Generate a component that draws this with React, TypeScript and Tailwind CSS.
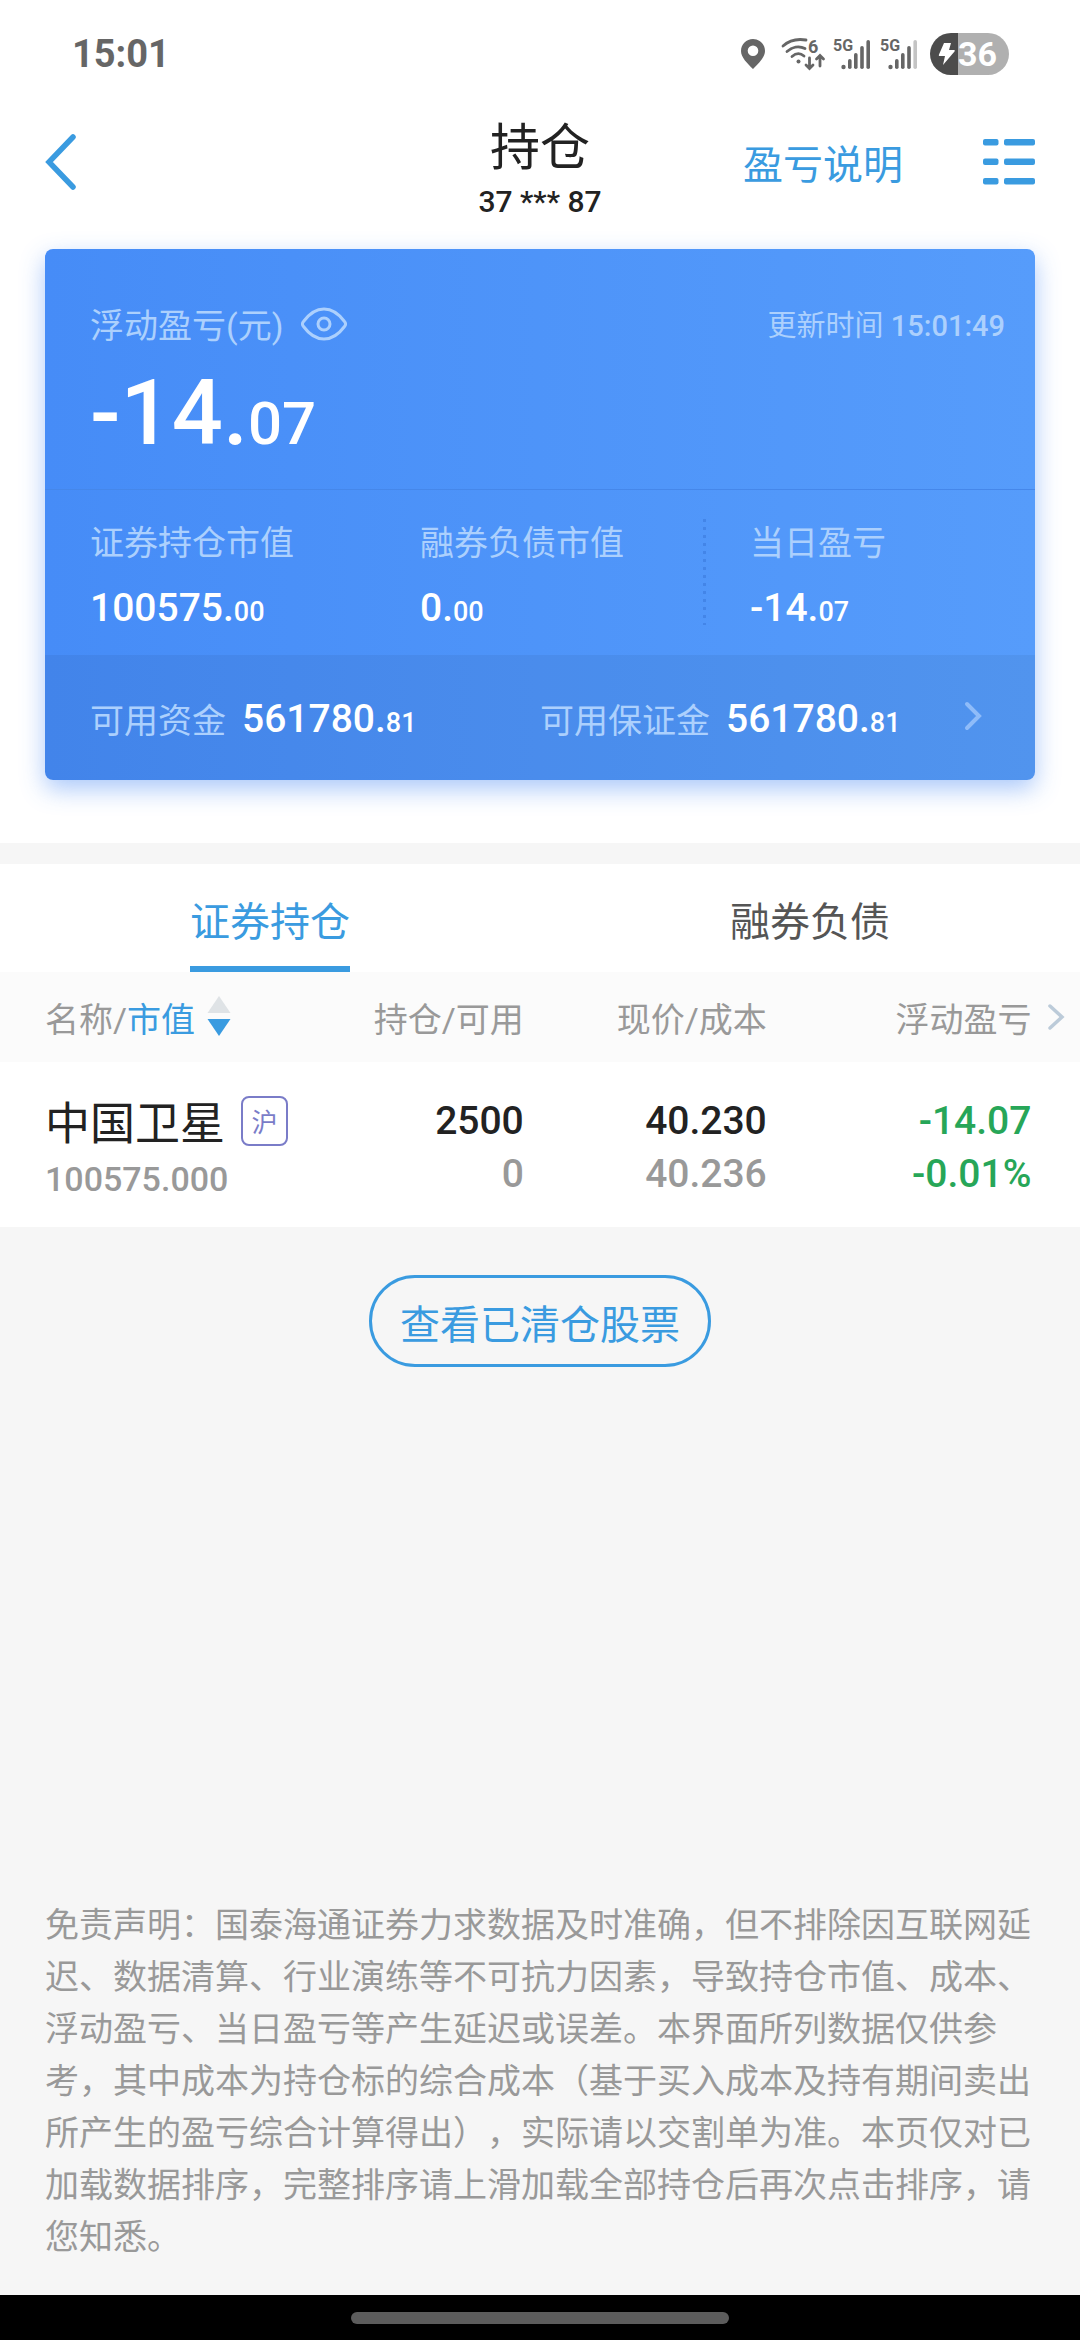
import type { ReactNode } from "react";

type Amount = {
  label: string;
  whole: string;
  cents: string;
};

type Holding = {
  name: string;
  market: string;
  value: string;
  quantity: string;
  available: string;
  price: string;
  cost: string;
  profit: string;
  profitRate: string;
};

const summary: Amount[] = [
  { label: "证券持仓市值", whole: "100575.", cents: "00" },
  { label: "融券负债市值", whole: "0.", cents: "00" },
  { label: "当日盈亏", whole: "-14.", cents: "07" },
];

const funds: Amount[] = [
  { label: "可用资金", whole: "561780.", cents: "81" },
  { label: "可用保证金", whole: "561780.", cents: "81" },
];

const holdings: Holding[] = [
  {
    name: "中国卫星",
    market: "沪",
    value: "100575.000",
    quantity: "2500",
    available: "0",
    price: "40.230",
    cost: "40.236",
    profit: "-14.07",
    profitRate: "-0.01%",
  },
];

function Signal({ weak = false }: { weak?: boolean }) {
  return (
    <svg
      className="overflow-visible"
      width="38"
      height="36"
      viewBox="0 0 38 36"
      fill="#666666"
      aria-hidden="true"
    >
      <text x="0" y="15" fontSize="16" fontWeight="700" fontFamily="Roboto, sans-serif">
        5G
      </text>
      <circle cx="10.5" cy="31" r="2.2" />
      <rect x="15" y="23" width="3.6" height="10" rx="1.8" />
      <rect x="21" y="17" width="3.6" height="16" rx="1.8" />
      <rect x="27.2" y="10" width="3.6" height="23" rx="1.8" />
      <rect x="33.4" y="4" width="3.6" height="29" rx="1.8" fill={weak ? "#c4c4c4" : "#666666"} />
    </svg>
  );
}

function StatusBar() {
  return (
    <div className="flex h-[108px] items-center justify-between pr-[71px] pl-[72px]">
      <span className="text-[38px] leading-[42px] font-bold text-[#666666]">15:01</span>
      <div className="flex items-center">
        <svg width="24" height="30" viewBox="0 0 24 30" fill="#666666" aria-hidden="true">
          <path
            fillRule="evenodd"
            d="M12 0C5.4 0 0 5.2 0 12c0 6.5 6.5 12.5 12 18 5.5-5.5 12-11.5 12-18C24 5.2 18.6 0 12 0Zm0 6.5a5.3 5.3 0 1 1 0 10.600 5.3 5.3 0 0 1 0-10.600Z"
          />
        </svg>
        <svg
          className="ml-4 overflow-visible"
          width="44"
          height="36"
          viewBox="0 0 44 36"
          fill="none"
          stroke="#666666"
          strokeWidth="2.8"
          strokeLinecap="round"
          aria-hidden="true"
        >
          <path d="M2 10C8 4.500 16 2.500 25 4" />
          <path d="M6 15.500c5-4.500 12-6 18-3" />
          <path d="M11 20.500c4-3.500 8.500-3.500 12-.5" />
          <circle cx="17.500" cy="25.500" r="2" fill="#666666" stroke="none" />
          <path d="M28.500 22v10M25 29l3.500 3.500L32 29" />
          <path d="M39 30V20M35.500 23l3.500-3.500 3.500 3.500" />
          <text
            x="27"
            y="17"
            fontSize="18"
            fontWeight="700"
            fontFamily="Roboto, sans-serif"
            fill="#666666"
            stroke="none"
          >
            6
          </text>
        </svg>
        <div className="ml-2 flex gap-[9px]">
          <Signal />
          <Signal weak />
        </div>
        <div className="ml-3 flex h-[42px] w-[79px] items-center rounded-full bg-[linear-gradient(90deg,#4c4c4c_35%,#b0b0b0_35%)] pl-2">
          <svg width="18" height="24" viewBox="0 0 18 24" fill="#ffffff" aria-hidden="true">
            <path d="M6 1h7l-2 7h5c1 0 1 1 .5 1.500L5 23l2-9H2c-1 0-1.500-.5-1-1.500Z" />
          </svg>
          <span className="ml-[2px] text-[34px] leading-[42px] font-bold text-white">36</span>
        </div>
      </div>
    </div>
  );
}

function Header() {
  return (
    <header className="grid h-[116px] grid-cols-[1fr_auto_1fr] items-center px-[45px]">
      <button type="button" aria-label="返回" className="justify-self-start pb-2">
        <svg width="34" height="58" viewBox="0 0 34 58" fill="none" stroke="#3a9be0" aria-hidden="true">
          <path d="M28 4 4 29l24 25" strokeWidth="5.500" strokeLinecap="round" />
        </svg>
      </button>
      <div className="text-center text-[#222222]">
        <h1 className="text-[50px] leading-[72px]">持仓</h1>
        <p className="text-[30px] leading-9 font-medium">37 *** 87</p>
      </div>
      <div className="flex items-center gap-20 justify-self-end pb-2">
        <a href="#profit-notes" className="pt-2 text-[40px] leading-[56px] text-[#3a9be0]">
          盈亏说明
        </a>
        <button type="button" aria-label="菜单">
          <svg width="52" height="48" viewBox="0 0 52 48" fill="#3a9be0" aria-hidden="true">
            <rect x="0" y="1" width="15.500" height="6.500" rx="2" />
            <rect x="21" y="1" width="31" height="6.500" rx="2" />
            <rect x="0" y="20.500" width="15.500" height="6.500" rx="2" />
            <rect x="21" y="20.500" width="31" height="6.500" rx="2" />
            <rect x="0" y="40" width="15.500" height="6.500" rx="2" />
            <rect x="21" y="40" width="31" height="6.500" rx="2" />
          </svg>
        </button>
      </div>
    </header>
  );
}

function Money({ whole, cents }: { whole: string; cents: string }) {
  return (
    <span className="text-[39px] leading-[48px] font-medium text-white">
      {whole}
      <span className="text-[27px]">{cents}</span>
    </span>
  );
}

function CardLabel({ children }: { children: ReactNode }) {
  return <span className="text-[34px] leading-[48px] text-[#acd0fd]">{children}</span>;
}

function SummaryCard() {
  return (
    <section
      aria-label="账户盈亏"
      className="mx-[45px] overflow-hidden rounded-lg bg-linear-to-r from-[#468cf7] to-[#569cfb] shadow-[0_9px_24px_rgba(66,133,244,0.45)]"
    >
      <div className="h-[240px] pt-[53px] pr-[30px] pl-[45px]">
        <div className="flex items-center justify-between">
          <div className="flex items-center gap-[18px]">
            <CardLabel>浮动盈亏(元)</CardLabel>
            <button type="button" aria-label="隐藏金额" className="pb-1">
              <svg
                width="46"
                height="34"
                viewBox="0 0 46 34"
                fill="none"
                stroke="#acd0fd"
                strokeWidth="3"
                aria-hidden="true"
              >
                <path d="M2.500 19.500c-1.300-1.500-1.300-3.500 0-5C8 7 15 2 23 2s15 5 20.500 12.500c1.300 1.500 1.300 3.500 0 5C38 27 31 32 23 32S8 27 2.500 19.500Z" />
                <circle cx="23" cy="17" r="6" />
              </svg>
            </button>
          </div>
          <span className="text-[29px] leading-[48px] text-[#acd0fd]">
            更新时间 <span className="font-medium">15:01:49</span>
          </span>
        </div>
        <p className="pt-1 text-[90px] leading-[120px] font-medium text-white">
          -14.<span className="text-[60px]">07</span>
        </p>
      </div>
      <dl className="grid h-[166px] grid-cols-3 border-t border-[#4587ea] pt-[29px]">
        {summary.map((item) => (
          <div key={item.label} className="relative flex flex-col gap-[10px] pl-[45px]">
            {item.label === "当日盈亏" && (
              <svg className="absolute top-0 -left-[2px]" width="3" height="106" aria-hidden="true">
                <path d="M1.500 0v106" stroke="#4385e8" strokeWidth="3" strokeDasharray="3 5" />
              </svg>
            )}
            <dt className="leading-[48px]">
              <CardLabel>{item.label}</CardLabel>
            </dt>
            <dd className="leading-[48px]">
              <Money whole={item.whole} cents={item.cents} />
            </dd>
          </div>
        ))}
      </dl>
      <a href="#funds" className="relative grid h-[125px] grid-cols-2 items-center bg-black/5 pt-[6px]">
        {funds.map((item, i) => (
          <span key={item.label} className={i === 0 ? "flex items-center gap-4 pl-[45px]" : "flex items-center gap-4"}>
            <CardLabel>{item.label}</CardLabel>
            <Money whole={item.whole} cents={item.cents} />
          </span>
        ))}
        <svg
          className="absolute top-[45px] right-[52px]"
          width="20"
          height="32"
          viewBox="0 0 20 32"
          fill="none"
          stroke="#8fbcf9"
          strokeWidth="4"
          strokeLinecap="round"
          aria-hidden="true"
        >
          <path d="M4 4l12 12L4 28" />
        </svg>
      </a>
    </section>
  );
}

function Tabs() {
  return (
    <div role="tablist" className="grid h-[108px] grid-cols-2 bg-white text-[40px]">
      <button role="tab" type="button" aria-selected="true" className="flex justify-center text-[#3a9be0]">
        <span className="flex h-full items-center border-b-[6px] border-[#3a9be0] pt-4">证券持仓</span>
      </button>
      <button role="tab" type="button" aria-selected="false" className="flex justify-center text-[#555555]">
        <span className="flex h-full items-center border-b-[6px] border-transparent pt-4">融券负债</span>
      </button>
    </div>
  );
}

function HoldingsTable() {
  return (
    <table className="w-full table-fixed bg-white text-right">
      <thead className="h-[90px] bg-[#fbfbfb] text-[34px] text-[#999999]">
        <tr>
          <th className="w-[30%] pt-[6px] pl-[45px] text-left font-normal">
            <button type="button" className="flex items-center">
              名称/<span className="text-[#3a9be0]">市值</span>
              <svg className="mb-2 ml-3" width="24" height="40" viewBox="0 0 24 40" aria-hidden="true">
                <path d="M12 0l11.500 17H.5Z" fill="#dfe3e6" />
                <path d="M12 40L.5 23h23Z" fill="#3a9be0" />
              </svg>
            </button>
          </th>
          <th className="w-[18.5%] pt-[6px] font-normal whitespace-nowrap">持仓/可用</th>
          <th className="w-[22.5%] pt-[6px] font-normal whitespace-nowrap">现价/成本</th>
          <th className="w-[24.5%] pt-[6px] font-normal whitespace-nowrap">浮动盈亏</th>
          <th className="w-[4.5%] font-normal">
            <button type="button" aria-label="更多列" className="flex w-full justify-center">
              <svg
                width="18"
                height="28"
                viewBox="0 0 18 28"
                fill="none"
                stroke="#bccbd9"
                strokeWidth="3.500"
                strokeLinecap="round"
                aria-hidden="true"
              >
                <path d="M3 3l12 11L3 25" />
              </svg>
            </button>
          </th>
        </tr>
      </thead>
      <tbody>
        {holdings.map((item) => (
          <tr key={item.name} className="h-[165px] text-[39px] leading-[53px] font-medium text-[#222222]">
            <td className="pt-[9px] pl-[45px] text-left font-normal">
              <div className="flex items-center gap-4">
                <span className="text-[45px] leading-[60px] whitespace-nowrap">{item.name}</span>
                <span className="mb-2 flex h-[50px] w-[47px] items-center justify-center rounded-lg border-2 border-[#7a7cc8] pt-1 text-[26px] text-[#7a7cc8]">
                  {item.market}
                </span>
              </div>
              <div className="text-[34px] leading-[48px] font-medium text-[#999999]">{item.value}</div>
            </td>
            <td className="pt-[6px]">
              {item.quantity}
              <div className="text-[#999999]">{item.available}</div>
            </td>
            <td className="pt-[6px]">
              {item.price}
              <div className="text-[#999999]">{item.cost}</div>
            </td>
            <td className="pt-[6px] text-[#27a658]">
              {item.profit}
              <div>{item.profitRate}</div>
            </td>
            <td></td>
          </tr>
        ))}
      </tbody>
    </table>
  );
}

export default function App() {
  return (
    <div className="flex min-h-screen flex-col bg-[#f6f6f6] font-[Roboto,'Noto_Sans_CJK_SC',sans-serif]">
      <div className="bg-white pb-[63px]">
        <StatusBar />
        <Header />
        <div className="h-[25px]" />
        <SummaryCard />
      </div>

      <main className="mt-[21px] flex grow flex-col">
        <Tabs />
        <HoldingsTable />
        <button
          type="button"
          className="mt-12 self-center rounded-full border-[3px] border-[#3a9be0] px-7 pt-[18px] pb-2 text-[40px] leading-[60px] text-[#3a9be0]"
        >
          查看已清仓股票
        </button>
        <p className="mt-auto px-[45px] pb-8 text-[34px] leading-[52px] text-[#999999] [text-spacing-trim:space-all]">
          免责声明：国泰海通证券力求数据及时准确，但不排除因互联网延迟、数据清算、行业演练等不可抗力因素，导致持仓市值、成本、浮动盈亏、当日盈亏等产生延迟或误差。本界面所列数据仅供参考，其中成本为持仓标的综合成本（基于买入成本及持有期间卖出所产生的盈亏综合计算得出），实际请以交割单为准。本页仅对已加载数据排序，完整排序请上滑加载全部持仓后再次点击排序，请您知悉。
        </p>
      </main>

      <div className="flex h-[45px] items-center justify-center bg-black">
        <div className="h-3 w-[35%] rounded-full bg-[#5c5c5c]" />
      </div>
    </div>
  );
}
